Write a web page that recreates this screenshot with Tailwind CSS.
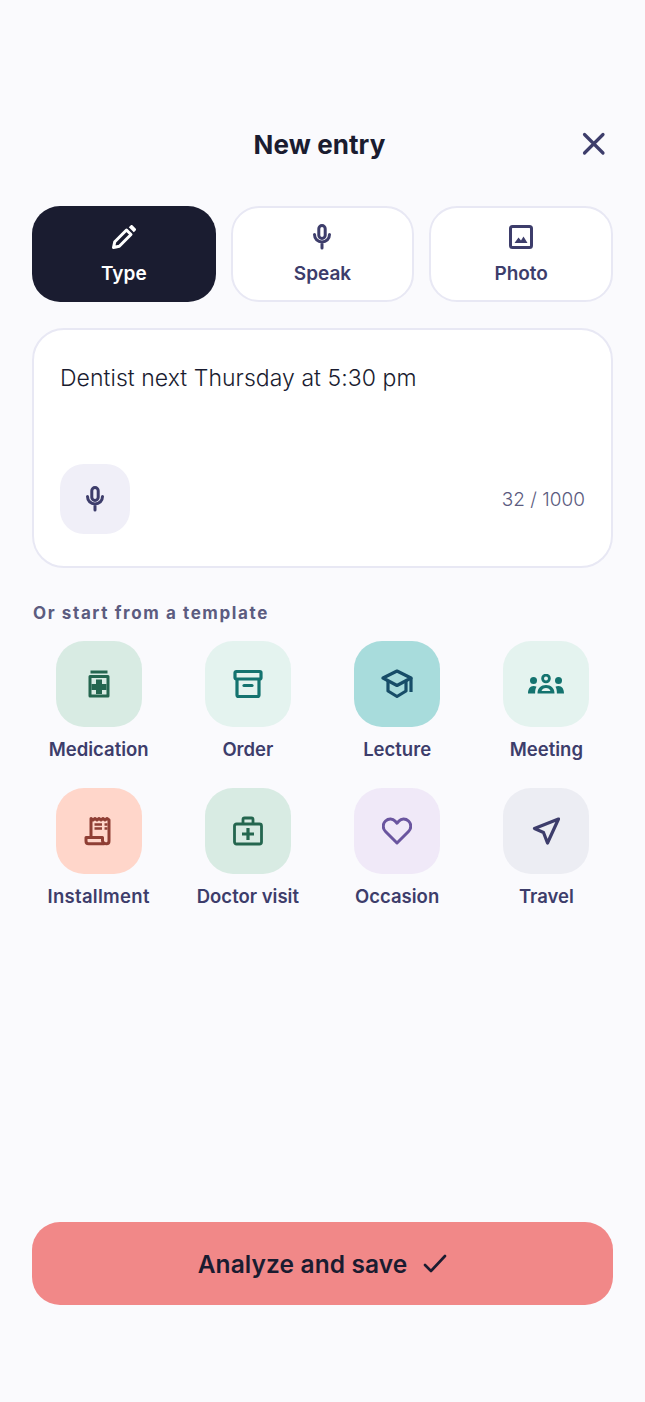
<!DOCTYPE html>
<html lang="en">

<head>
  <meta charset="UTF-8">
  <meta name="viewport" content="width=device-width, initial-scale=1.0">
  <script src="https://cdn.jsdelivr.net/npm/@tailwindcss/browser@4"></script>
</head>

<body class="bg-[#fafafd] font-['Inter',sans-serif] text-[#1a1c30]">
  <div class="w-[645px] h-[1402px] flex flex-col px-8 pt-[128px]">

    <!-- header -->
    <div class="relative h-[34px] flex items-center justify-center -translate-x-[3px]">
      <h1 class="text-[26px] font-bold leading-[34px] tracking-[0.1px]">New entry</h1>
      <svg class="absolute right-[2px] top-[2px] w-7 h-7 text-[#3d3d6b]" viewBox="0 0 28 28" fill="none" stroke="currentColor" stroke-width="3.200" stroke-linecap="round"><path d="M4.500 4.500 23 23M23 4.500 4.500 23"/></svg>
    </div>

    <!-- input mode tabs -->
    <div class="grid grid-cols-3 gap-[15px] mt-[44px]">
      <div class="h-[96px] rounded-[28px] bg-[#1a1c30] text-white flex flex-col items-center pt-[17px]">
        <svg class="w-7 h-7" viewBox="0 0 28 28" fill="none"><path d="M3.500 24.500l1.300-5.800L16.500 7l4.500 4.500L9.300 23.200l-5.800 1.300z" stroke="currentColor" stroke-width="3" stroke-linejoin="round"/><path d="M18.800 4.200l1.800-1.800c.6-.6 1.400-.6 2 0l3 3c.6.6.6 1.400 0 2l-1.800 1.800-5-5z" fill="currentColor"/></svg>
        <span class="mt-[11px] text-[19px] font-semibold leading-6">Type</span>
      </div>
      <div class="h-[96px] rounded-[28px] bg-white border-2 border-[#e8e8f4] text-[#3d3d6b] flex flex-col items-center pt-[15px]">
        <svg class="w-7 h-7" viewBox="0 0 28 28" fill="none" stroke="currentColor" stroke-width="3" stroke-linecap="round"><rect x="10.800" y="2.500" width="6.400" height="13" rx="3.200"/><path d="M6.500 11.500c0 4.500 3.300 7.500 7.500 7.500s7.500-3 7.500-7.500M14 19v6"/></svg>
        <span class="mt-[11px] text-[19px] font-semibold leading-6">Speak</span>
      </div>
      <div class="h-[96px] rounded-[28px] bg-white border-2 border-[#e8e8f4] text-[#3d3d6b] flex flex-col items-center pt-[15px]">
        <svg class="w-7 h-7" viewBox="0 0 28 28" fill="none"><rect x="3.500" y="3.500" width="21" height="21" rx="2" stroke="currentColor" stroke-width="3"/><path d="M7.500 20l4-5.500 2.500 3 2.500-4 4 6.500h-13z" fill="currentColor"/></svg>
        <span class="mt-[11px] text-[19px] font-semibold leading-6">Photo</span>
      </div>
    </div>

    <!-- text input card -->
    <div class="mt-[26px] h-[240px] rounded-[32px] bg-white border-2 border-[#e8e8f4] px-[26px] pt-[31px] flex flex-col">
      <p class="text-[23px] leading-[34px] font-light tracking-[0.05px]">Dentist next Thursday at 5:30 pm</p>
      <div class="mt-auto mb-[32px] flex items-center justify-between">
        <div class="w-[70px] h-[70px] rounded-[24px] bg-[#f0eff8] flex items-center justify-center text-[#3d3d6b]">
          <svg class="w-7 h-7" viewBox="0 0 28 28" fill="none" stroke="currentColor" stroke-width="3" stroke-linecap="round"><rect x="10.800" y="2.500" width="6.400" height="13" rx="3.200"/><path d="M6.500 11.500c0 4.500 3.300 7.500 7.500 7.500s7.500-3 7.500-7.500M14 19v6"/></svg>
        </div>
        <span class="text-[19px] font-light text-[#5c5c80] leading-6 mt-[2px]">32 / 1000</span>
      </div>
    </div>

    <!-- templates -->
    <h2 class="mt-[34px] ml-[1px] text-[17px] leading-[22px] font-bold tracking-[1.600px] text-[#5c5c80]">Or start from a template</h2>
    <div class="grid grid-cols-4 gap-x-4 gap-y-[27px] mt-[17px] text-[#3d3d6b]">

      <div class="flex flex-col items-center">
        <div class="w-[86px] h-[86px] rounded-[28px] bg-[#d8ebe3] flex items-center justify-center text-[#24664f]">
          <svg class="w-7 h-7" viewBox="0 0 28 28" fill="currentColor"><path d="M5.500 .5h17v3h-17z"/><path fill-rule="evenodd" d="M5 5h18a1.500 1.500 0 0 1 1.500 1.500V26a1.500 1.500 0 0 1-1.500 1.500H5A1.500 1.500 0 0 1 3.500 26V6.500A1.500 1.500 0 0 1 5 5zm1.500 3v16.500h15V8H6.500z"/><path d="M11 9.500h6V14h4.500v6H17v4h-6v-4H6.500v-6H11z"/></svg>
        </div>
        <span class="mt-[10px] text-[18.500px] leading-6 font-semibold">Medication</span>
      </div>

      <div class="flex flex-col items-center">
        <div class="w-[86px] h-[86px] rounded-[28px] bg-[#e4f3ef] flex items-center justify-center text-[#14736f]">
          <svg class="w-[30px] h-[30px]" viewBox="0 0 30 30" fill="none" stroke="currentColor" stroke-width="3.200" stroke-linejoin="round"><rect x="2" y="2.500" width="26" height="7.500" rx="1.200"/><path d="M4 10v16a1.500 1.500 0 0 0 1.500 1.500h19A1.500 1.500 0 0 0 26 26V10"/><path d="M11 16.500h8" stroke-linecap="round"/></svg>
        </div>
        <span class="mt-[10px] text-[18.500px] leading-6 font-semibold">Order</span>
      </div>

      <div class="flex flex-col items-center">
        <div class="w-[86px] h-[86px] rounded-[28px] bg-[#a8dcdc] flex items-center justify-center text-[#174d68]">
          <svg class="w-8 h-[30px]" viewBox="0 0 32 30" fill="none" stroke="currentColor" stroke-width="3.200" stroke-linejoin="round"><path d="M2 9 16 2l14 7-14 7.500L2 9z"/><path d="M7 12v10l9 5.500 9-5.500V12"/><path d="M30 9v14"/></svg>
        </div>
        <span class="mt-[10px] text-[18.500px] leading-6 font-semibold">Lecture</span>
      </div>

      <div class="flex flex-col items-center">
        <div class="w-[86px] h-[86px] rounded-[28px] bg-[#e4f3ef] flex items-center justify-center text-[#14736f]">
          <svg class="w-9 h-[20px]" viewBox="0 0 36 20" fill="currentColor"><circle cx="5.500" cy="6.500" r="3.500"/><circle cx="30.500" cy="6.500" r="3.500"/><circle cx="18" cy="4.500" r="3.400" fill="none" stroke="currentColor" stroke-width="2.800"/><path fill-rule="evenodd" d="M9.500 19.500c0-5.500 3.500-8.500 8.500-8.500s8.500 3 8.500 8.500h-17zm4-2.500h9c-.7-2-2.300-3.100-4.500-3.100s-3.800 1.100-4.500 3.100z"/><path d="M0 19.500c0-4.500 2-7.500 5.500-7.500 1.300 0 2.300.3 3 .8-.9 1.600-1.400 3.700-1.400 6.700H0zM36 19.500c0-4.500-2-7.500-5.500-7.500-1.300 0-2.300.3-3 .8.900 1.600 1.400 3.700 1.400 6.700H36z"/></svg>
        </div>
        <span class="mt-[10px] text-[18.500px] leading-6 font-semibold">Meeting</span>
      </div>

      <div class="flex flex-col items-center">
        <div class="w-[86px] h-[86px] rounded-[28px] bg-[#ffd6ca] flex items-center justify-center text-[#8f3e34]">
          <svg class="w-[30px] h-[30px]" viewBox="0 0 30 30" fill="none" stroke="currentColor" stroke-width="3"><path d="M7 20V2.500l2 1.500 2-1.500 2 1.500 2-1.500 2 1.500 2-1.500 2 1.500 2-1.500 2 1.500V25c0 1.700-1 2.800-2.500 2.800S18.500 26.500 18.500 25v-3.500H2V25c0 1.700 1 2.800 2.500 2.800h16" stroke-linejoin="round"/><path d="M10.500 8.500H18M10.500 12.500H18M20.500 8.500h3M20.500 12.500h3" stroke-width="2.400"/></svg>
        </div>
        <span class="mt-[10px] text-[18.500px] leading-6 font-semibold tracking-[0.3px]">Installment</span>
      </div>

      <div class="flex flex-col items-center">
        <div class="w-[86px] h-[86px] rounded-[28px] bg-[#d8ebe3] flex items-center justify-center text-[#24664f]">
          <svg class="w-[30px] h-[30px]" viewBox="0 0 30 30" fill="none" stroke="currentColor" stroke-width="2.800" stroke-linejoin="round"><rect x="1.500" y="8" width="27" height="20" rx="2"/><path d="M10 8V3.500A1.500 1.500 0 0 1 11.500 2h7A1.500 1.500 0 0 1 20 3.500V8"/><path d="M15 12v12M9 18h12" stroke-width="3.200"/></svg>
        </div>
        <span class="mt-[10px] text-[18.500px] leading-6 font-semibold">Doctor visit</span>
      </div>

      <div class="flex flex-col items-center">
        <div class="w-[86px] h-[86px] rounded-[28px] bg-[#f0e9f8] flex items-center justify-center text-[#6a559f]">
          <svg class="w-[30px] h-[28px]" viewBox="0 0 30 28" fill="none" stroke="currentColor" stroke-width="3" stroke-linejoin="round"><path d="M15 26 3.500 14.500C.5 11.500.5 6.800 3.500 4s7.300-2.500 9.500 0l2 2.200L17 4c2.200-2.500 6.500-2.800 9.500 0s3 7.500 0 10.500L15 26z"/></svg>
        </div>
        <span class="mt-[10px] text-[18.500px] leading-6 font-semibold">Occasion</span>
      </div>

      <div class="flex flex-col items-center">
        <div class="w-[86px] h-[86px] rounded-[28px] bg-[#ecedf3] flex items-center justify-center text-[#3d3d6b]">
          <svg class="w-7 h-7" viewBox="0 0 28 28" fill="none" stroke="currentColor" stroke-width="3.200" stroke-linejoin="round"><path d="M26.500 2 2.500 11.500 11.500 15.500 15.500 26z"/></svg>
        </div>
        <span class="mt-[10px] text-[18.500px] leading-6 font-semibold">Travel</span>
      </div>
    </div>

    <!-- submit -->
    <div class="mt-auto mb-[97px] h-[83px] rounded-[28px] bg-[#f18888] flex items-center justify-center gap-[16px]">
      <span class="text-[24.500px] font-semibold leading-8 tracking-[0.1px]">Analyze and save</span>
      <svg class="w-6 h-5" viewBox="0 0 24 20" fill="none" stroke="currentColor" stroke-width="2.600" stroke-linecap="round" stroke-linejoin="round"><path d="M2 11l6 6L22 2"/></svg>
    </div>
  </div>
</body>

</html>
